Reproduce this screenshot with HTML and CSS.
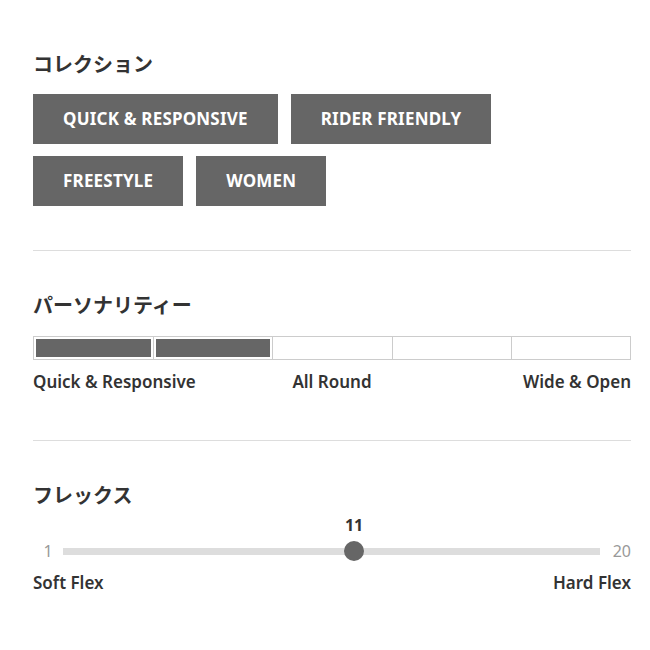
FILE: index.html
```html
<!DOCTYPE html>
<html lang="ja">
<head>
<meta charset="utf-8">
<link rel="stylesheet" href="styles.css">
</head>
<body>
<div class="panel">
  <section class="block block-collection">
    <h2 class="title">コレクション</h2>
    <div class="tags">
      <span class="tag">QUICK &amp; RESPONSIVE</span>
      <span class="tag">RIDER FRIENDLY</span>
      <span class="tag">FREESTYLE</span>
      <span class="tag">WOMEN</span>
    </div>
  </section>
  <hr class="divider">
  <section class="block">
    <h2 class="title">パーソナリティー</h2>
    <div class="meter">
      <div class="seg on"><span></span></div>
      <div class="seg on"><span></span></div>
      <div class="seg"><span></span></div>
      <div class="seg"><span></span></div>
      <div class="seg"><span></span></div>
    </div>
    <div class="scale">
      <span class="lbl">Quick &amp; Responsive</span>
      <span class="lbl mid">All Round</span>
      <span class="lbl end">Wide &amp; Open</span>
    </div>
  </section>
  <hr class="divider second">
  <section class="block">
    <h2 class="title">フレックス</h2>
    <div class="slider">
      <span class="num min">1</span>
      <div class="track">
        <div class="thumb" style="left: 54.2%">
          <span class="value">11</span>
        </div>
      </div>
      <span class="num max">20</span>
    </div>
    <div class="scale flex-scale">
      <span class="lbl">Soft Flex</span>
      <span class="lbl end">Hard Flex</span>
    </div>
  </section>
</div>
</body>
</html>
```

FILE: styles.css
```css
html, body {
  margin: 0;
  padding: 0;
  background: #fff;
}
body {
  font-family: "Noto Sans", "Noto Sans CJK JP", sans-serif;
  color: #333;
}
.panel {
  width: 598px;
  padding: 50px 0 0 33px;
}
.title {
  margin: 0;
  font-family: "Noto Sans CJK JP", sans-serif;
  font-weight: 700;
  font-size: 20px;
  line-height: 28px;
  color: #333;
}
.tags {
  margin-top: 16px;
  display: flex;
  flex-wrap: wrap;
  gap: 12px 13px;
  width: 470px;
}
.tag {
  display: block;
  height: 50px;
  line-height: 50px;
  padding: 0 30px;
  background: #666;
  color: #fff;
  font-weight: 700;
  font-size: 17px;
  letter-spacing: 0.2px;
  box-sizing: border-box;
}
.divider {
  border: 0;
  border-top: 1px solid #ddd;
  margin: 44px 0 40px;
}
.divider.second {
  margin-top: 46px;
}
.meter {
  margin-top: 17px;
  display: grid;
  grid-template-columns: repeat(5, 1fr);
  border: 1px solid #ccc;
  height: 24px;
  box-sizing: border-box;
}
.seg {
  padding: 2px;
  border-left: 1px solid #ccc;
}
.seg:first-child {
  border-left: 0;
}
.seg span {
  display: block;
  height: 100%;
}
.seg.on span {
  background: #666;
}
.scale {
  display: grid;
  grid-template-columns: 1fr 1fr 1fr;
  margin-top: 10px;
  font-size: 17px;
  font-weight: 600;
  line-height: 24px;
}
.lbl.mid { text-align: center; }
.lbl.end { text-align: right; }
.slider {
  margin-top: 15px;
  display: flex;
  align-items: center;
  height: 44px;
  padding-top: 10px;
  box-sizing: border-box;
}
.num {
  font-size: 16px;
  color: #999;
  line-height: 20px;
}
.num.min {
  width: 30px;
  text-align: center;
}
.num.max {
  width: 31px;
  text-align: right;
}
.track {
  position: relative;
  flex: 1;
  height: 7px;
  background: #ddd;
}
.thumb {
  position: absolute;
  top: 50%;
  width: 20px;
  height: 20px;
  margin: -10px 0 0 -10px;
  border-radius: 50%;
  background: #666;
}
.value {
  position: absolute;
  bottom: 26px;
  left: 50%;
  transform: translateX(-50%);
  font-size: 16px;
  font-weight: 700;
  color: #333;
  line-height: 20px;
}
.flex-scale {
  grid-template-columns: 1fr 1fr;
  margin-top: 3px;
}
```
